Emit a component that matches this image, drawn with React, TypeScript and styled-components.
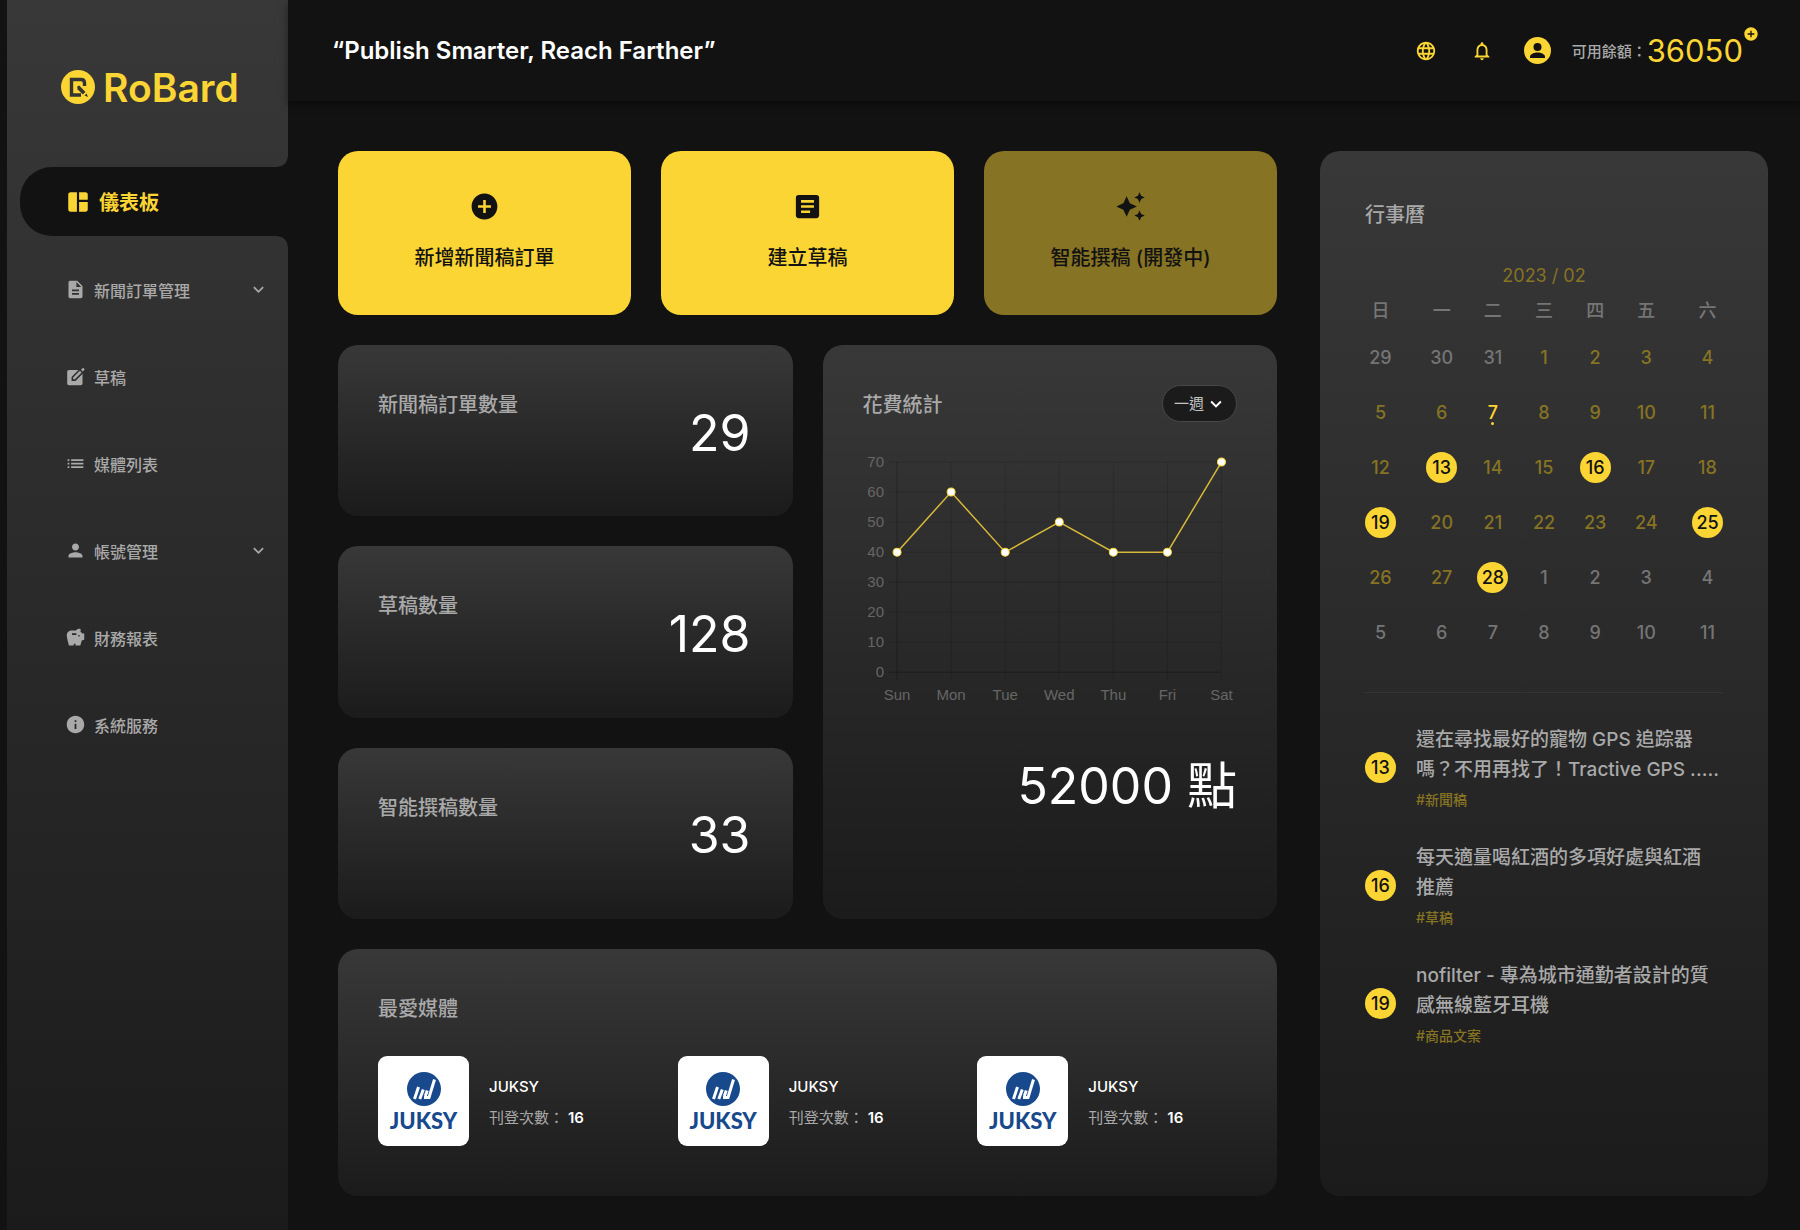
import React from 'react';
import styled, { createGlobalStyle, css } from 'styled-components';
import {
  MdAddCircle,
  MdArticle,
  MdAutoAwesome,
  MdDescription,
  MdInfo,
  MdKeyboardArrowDown,
  MdLanguage,
  MdList,
  MdNotificationsNone,
  MdPerson,
  MdSavings,
  MdSpaceDashboard,
} from 'react-icons/md';

const color = {
  page: '#121212',
  yellow: '#fbd533',
  dimYellow: '#867323',
  text: '#a9a9a9',
  faint: '#757575',
  white: '#ffffff',
};

const panel = css`
  background: linear-gradient(180deg, #383838 0%, #1b1b1b 100%);
  border-radius: 20px;
`;

const GlobalStyle = createGlobalStyle`
  *, *::before, *::after { box-sizing: border-box; }
  body {
    margin: 0;
    background: ${color.page};
    color: ${color.text};
    font-family: Inter, "Noto Sans CJK TC", sans-serif;
    font-size: 16px;
  }
  button, select { font: inherit; }
  h1, h2, p, ul { margin: 0; padding: 0; }
  ul { list-style: none; }
  svg { display: block; }
`;

const Shell = styled.div`
  display: flex;
  min-height: 100vh;
  padding-left: 7px;
`;

const Sidebar = styled.aside`
  flex: 0 0 281px;
  background: linear-gradient(180deg, #383838 0%, #1b1b1b 100%);
`;

const Brand = styled.a`
  display: flex;
  align-items: center;
  gap: 8px;
  height: 167px;
  padding: 7px 0 0 54px;
  color: ${color.yellow};
  font-size: 39px;
  font-weight: 600;
  text-decoration: none;
`;

const NavList = styled.ul`
  display: flex;
  flex-direction: column;
`;

const NavLink = styled.a`
  display: flex;
  align-items: center;
  gap: 8px;
  height: 87px;
  padding: 0 19px 0 58px;
  color: ${color.text};
  font-weight: 500;
  text-decoration: none;

  span {
    flex: 1;
  }
`;

const ActiveLink = styled.a`
  position: relative;
  display: flex;
  align-items: center;
  gap: 8px;
  height: 69px;
  margin: 0 0 10px 13px;
  padding-left: 45px;
  background: ${color.page};
  border-radius: 32px 0 0 32px;
  color: ${color.yellow};
  font-size: 20px;
  font-weight: 700;
  text-decoration: none;

  &::before,
  &::after {
    content: '';
    position: absolute;
    right: 0;
    width: 10px;
    height: 10px;
  }
  &::before {
    bottom: 100%;
    background: radial-gradient(circle at 0 0, transparent 9px, ${color.page} 10px);
  }
  &::after {
    top: 100%;
    background: radial-gradient(circle at 0 100%, transparent 9px, ${color.page} 10px);
  }
`;

const Content = styled.div`
  flex: 1;
  min-width: 0;
  display: flex;
  flex-direction: column;
`;

const TopBar = styled.header`
  display: flex;
  align-items: center;
  justify-content: space-between;
  height: 101px;
  padding: 0 43px 0 44px;
  box-shadow: 0 4px 8px rgba(0, 0, 0, 0.4);
`;

const Slogan = styled.h1`
  color: ${color.white};
  font-size: 24px;
  font-weight: 600;
`;

const Tools = styled.div`
  display: flex;
  align-items: center;
`;

const IconButton = styled.button`
  display: flex;
  align-items: center;
  justify-content: center;
  width: 56px;
  height: 40px;
  padding: 0;
  border: 0;
  background: none;
  color: ${color.yellow};
`;

const Balance = styled.p`
  position: relative;
  display: flex;
  align-items: center;
  margin-left: 6px;
  padding-right: 14px;
  font-size: 15px;
  font-weight: 500;
`;

const BalanceValue = styled.strong`
  color: ${color.yellow};
  font-size: 31px;
  font-weight: 400;
`;

const TopUpButton = styled.button`
  position: absolute;
  top: -6px;
  right: -2px;
  padding: 0;
  border: 0;
  background: none;
  color: ${color.yellow};
`;

const Board = styled.main`
  flex: 1;
  display: grid;
  grid-template-columns: minmax(0, 1fr) 448px;
  gap: 43px;
  padding: 50px 32px 34px 50px;
`;

const Overview = styled.div`
  display: flex;
  flex-direction: column;
  gap: 30px;
`;

const Actions = styled.div`
  display: grid;
  grid-template-columns: repeat(3, 1fr);
  gap: 30px;
`;

const ActionCard = styled.button`
  display: flex;
  flex-direction: column;
  align-items: center;
  justify-content: center;
  gap: 20px;
  height: 164px;
  padding: 0 0 2px;
  border: 0;
  border-radius: 20px;
  background: ${color.yellow};
  color: ${color.page};
  font-size: 20px;
  font-weight: 500;
  line-height: 32px;

  &:disabled {
    background: ${color.dimYellow};
  }
`;

const Statistics = styled.div`
  display: grid;
  grid-template-columns: repeat(2, 1fr);
  gap: 30px;
`;

const StatColumn = styled.div`
  display: flex;
  flex-direction: column;
  gap: 30px;
  min-height: 574px;
`;

const PanelTitle = styled.h2`
  color: ${color.text};
  font-size: 20px;
  font-weight: 500;
  line-height: 40px;
`;

const StatCard = styled.section`
  ${panel}
  flex: 1;
  display: flex;
  justify-content: space-between;
  padding: 40px 42px 36px 40px;
`;

const BigNumber = styled.p`
  align-self: center;
  color: ${color.white};
  font-size: 50px;
  line-height: 60px;
`;

const SpendCard = styled.section`
  ${panel}
  display: flex;
  flex-direction: column;
  padding: 40px;
`;

const PanelHead = styled.div`
  display: flex;
  justify-content: space-between;
`;

const SelectBox = styled.label`
  position: relative;
  display: block;
  width: 75px;
  height: 37px;
  color: ${color.white};

  svg {
    position: absolute;
    top: 8px;
    right: 10px;
    pointer-events: none;
  }
`;

const PeriodSelect = styled.select`
  width: 100%;
  height: 100%;
  padding: 0 0 0 11px;
  border: 1px solid #484848;
  border-radius: 19px;
  background: #1b1b1b;
  color: #c4c4c4;
  font-size: 15px;
  appearance: none;
`;

const ChartArea = styled.div`
  margin: 25px 0 56px;

  svg {
    width: 100%;
    overflow: visible;
  }
  text {
    fill: #666666;
    font-family: 'Liberation Sans', Arial, sans-serif;
    font-size: 15px;
  }
`;

const SpendTotal = styled(BigNumber)`
  align-self: flex-end;
`;

const MediaCard = styled.section`
  ${panel}
  height: 247px;
  padding: 40px;
`;

const MediaList = styled.ul`
  display: grid;
  grid-template-columns: repeat(3, 1fr);
  gap: 40px;
  margin-top: 27px;
`;

const MediaItem = styled.li`
  display: flex;
  align-items: center;
  gap: 20px;
`;

const MediaLogo = styled.div`
  flex: none;
  display: flex;
  flex-direction: column;
  align-items: center;
  gap: 2px;
  width: 91px;
  height: 90px;
  padding-top: 16px;
  border-radius: 9px;
  background: ${color.white};
  color: #17498c;
  font-family: Lato, sans-serif;
  font-size: 22px;
  font-weight: 900;
  line-height: 26px;
`;

const MediaText = styled.div`
  padding-top: 2px;
  color: ${color.text};
  font-size: 15px;
  line-height: 31px;

  strong {
    color: ${color.white};
    font-weight: 500;
  }
  p strong {
    margin-left: 4px;
    font-weight: 600;
  }
`;

const CalendarCard = styled.section`
  ${panel}
  padding: 44px 45px;
`;

const MonthTable = styled.table`
  width: 100%;
  margin-top: 24px;
  border-collapse: collapse;
  table-layout: fixed;
  color: ${color.faint};
  font-size: 18px;

  caption {
    color: ${color.dimYellow};
    line-height: 34px;
  }
  th,
  td {
    height: 55px;
    padding: 0;
    font-weight: 500;
    text-align: center;
  }
  th {
    height: 37px;
    padding-bottom: 6px;
  }
  th:first-child,
  td:first-child {
    text-align: left;
  }
  th:last-child,
  td:last-child {
    text-align: right;
  }
`;

type DayKind = 'out' | 'in' | 'today' | 'marked';

const dayStyles = {
  out: css`
    color: ${color.faint};
  `,
  in: css`
    color: ${color.dimYellow};
  `,
  today: css`
    color: ${color.yellow};

    &::after {
      content: '';
      position: absolute;
      bottom: 3px;
      width: 3px;
      height: 3px;
      border-radius: 50%;
      background: ${color.yellow};
    }
  `,
  marked: css`
    background: ${color.yellow};
    color: ${color.page};
  `,
};

const Day = styled.span<{ $kind: DayKind }>`
  position: relative;
  display: inline-flex;
  flex: none;
  align-items: center;
  justify-content: center;
  width: 31px;
  height: 31px;
  border-radius: 50%;
  font-size: 18px;
  font-weight: 500;
  vertical-align: middle;
  ${({ $kind }) => dayStyles[$kind]}
`;

const EventList = styled.ul`
  display: flex;
  flex-direction: column;
  gap: 33px;
  margin-top: 32px;
  padding-top: 32px;
  border-top: 1px solid #343434;
`;

const EventItem = styled.li`
  display: flex;
  align-items: center;
  gap: 20px;
`;

const EventTitle = styled.p`
  max-width: 303px;
  font-size: 19px;
  font-weight: 500;
  line-height: 30px;
`;

const EventTag = styled.p`
  margin-top: 4px;
  color: ${color.dimYellow};
  font-size: 14px;
  font-weight: 500;
  line-height: 21px;
`;

interface IconProps {
  size: number;
}

function DraftIcon({ size }: IconProps) {
  return (
    <svg width={size} height={size} viewBox="0 0 24 24" aria-hidden="true">
      <mask id="draft-cut">
        <rect width="24" height="24" fill="#ffffff" />
        <path d="M7.500 17V12.500L16.500 3.500L22 0L24 6L21 8L12 17Z" fill="#000000" />
      </mask>
      <rect x="2.500" y="4.500" width="17.500" height="17.500" rx="2" fill="currentColor" mask="url(#draft-cut)" />
      <path d="M9.300 15.200V13.200L17 5.500L19 7.500L11.300 15.200Z" fill="currentColor" />
      <path d="M18.300 4.200L20 2.500Q20.700 2 21.400 2.600L22 3.200Q22.500 3.900 22 4.500L20.300 6.200Z" fill="currentColor" />
    </svg>
  );
}

function AvatarIcon() {
  return (
    <svg width="27" height="27" viewBox="0 0 27 27" aria-hidden="true">
      <circle cx="13.500" cy="13.500" r="13.500" fill="currentColor" />
      <circle cx="13.500" cy="10" r="4" fill="#121212" />
      <path d="M6 21V19.700C6 16.900 10.800 15.500 13.500 15.500C16.200 15.500 21 16.900 21 19.700V21Z" fill="#121212" />
    </svg>
  );
}

const navItems = [
  { label: '新聞訂單管理', Icon: MdDescription, expandable: true },
  { label: '草稿', Icon: DraftIcon, expandable: false },
  { label: '媒體列表', Icon: MdList, expandable: false },
  { label: '帳號管理', Icon: MdPerson, expandable: true },
  { label: '財務報表', Icon: MdSavings, expandable: false },
  { label: '系統服務', Icon: MdInfo, expandable: false },
];

const stats = [
  { label: '新聞稿訂單數量', value: 29 },
  { label: '草稿數量', value: 128 },
  { label: '智能撰稿數量', value: 33 },
];

const spending = [
  { day: 'Sun', value: 40 },
  { day: 'Mon', value: 60 },
  { day: 'Tue', value: 40 },
  { day: 'Wed', value: 50 },
  { day: 'Thu', value: 40 },
  { day: 'Fri', value: 40 },
  { day: 'Sat', value: 70 },
];

const media = [
  { id: 1, name: 'JUKSY', count: 16 },
  { id: 2, name: 'JUKSY', count: 16 },
  { id: 3, name: 'JUKSY', count: 16 },
];

const events = [
  { day: 13, title: '還在尋找最好的寵物 GPS 追踪器嗎？不用再找了！Tractive GPS .....', tag: '#新聞稿' },
  { day: 16, title: '每天適量喝紅酒的多項好處與紅酒推薦', tag: '#草稿' },
  { day: 19, title: 'nofilter - 專為城市通勤者設計的質感無線藍牙耳機', tag: '#商品文案' },
];

const weekdays = ['日', '一', '二', '三', '四', '五', '六'];
const markedDays = [13, 16, 19, 25, 28];
const today = 7;

function buildWeeks() {
  const cells = Array.from({ length: 42 }, (_, i) => {
    const date = new Date(2023, 0, 29 + i);
    const day = date.getDate();
    let kind: DayKind = 'out';
    if (date.getMonth() === 1) {
      kind = markedDays.includes(day) ? 'marked' : day === today ? 'today' : 'in';
    }
    return { day, kind };
  });
  return Array.from({ length: 6 }, (_, w) => cells.slice(w * 7, w * 7 + 7));
}

function BrandMark() {
  return (
    <svg width="34" height="34" viewBox="0 0 34 34" aria-hidden="true">
      <circle cx="17" cy="17" r="17" fill="#fbd533" />
      <path
        d="M20 25H10.500V9.500H20C22.200 9.500 23.500 11 23.500 13V16"
        fill="none"
        stroke="#343434"
        strokeWidth="3.400"
      />
      <path d="M16.200 16.500L18.200 15.500L24.500 22L21.800 24.600L16.500 19.300Z" fill="#343434" />
      <path d="M23.500 25.500L25.600 23.500L27 27Z" fill="#343434" />
    </svg>
  );
}

function JuksyMark() {
  return (
    <svg width="34" height="34" viewBox="0 0 34 34" aria-hidden="true">
      <circle cx="17" cy="17" r="17" fill="#17498c" />
      <g fill="none" stroke="#ffffff" strokeWidth="3">
        <path d="M7.500 27L11.500 15" />
        <path d="M12.800 27L16.300 17.500" />
        <path d="M18.300 24L20.300 18.500" />
        <path d="M17 25.500H22L27.500 7.500" />
      </g>
    </svg>
  );
}

function SpendChart() {
  const left = 34;
  const top = 12;
  const stepX = 54;
  const stepY = 30;
  const bottom = top + stepY * 7;
  const right = left + stepX * 6;
  const points = spending.map((d, i) => ({ x: left + i * stepX, y: bottom - (d.value / 10) * stepY }));

  return (
    <ChartArea>
      <svg viewBox="0 0 374 250" role="img" aria-label="花費統計">
        {Array.from({ length: 8 }, (_, i) => {
          const y = bottom - i * stepY;
          return (
            <g key={i}>
              <line x1={left - 8} x2={right} y1={y} y2={y} stroke="#000000" strokeOpacity={i === 0 ? 0.25 : 0.13} />
              <text x={left - 13} y={y + 5} textAnchor="end">
                {i * 10}
              </text>
            </g>
          );
        })}
        {spending.map((d, i) => {
          const x = left + i * stepX;
          return (
            <g key={d.day}>
              <line x1={x} x2={x} y1={top} y2={bottom + 8} stroke="#000000" strokeOpacity={i === 0 ? 0.25 : 0.13} />
              <text x={x} y={bottom + 28} textAnchor="middle">
                {d.day}
              </text>
            </g>
          );
        })}
        <polyline
          points={points.map((p) => `${p.x},${p.y}`).join(' ')}
          fill="none"
          stroke="#d8b83a"
          strokeWidth="1.500"
        />
        {points.map((p) => (
          <circle key={p.x} cx={p.x} cy={p.y} r="4" fill="#ffffff" stroke="#fbd533" />
        ))}
      </svg>
    </ChartArea>
  );
}

export default function App() {
  return (
    <>
      <GlobalStyle />
      <Shell>
        <Sidebar>
          <Brand href="#">
            <BrandMark />
            RoBard
          </Brand>
          <nav>
            <ActiveLink href="#dashboard" aria-current="page">
              <MdSpaceDashboard size={26} />
              儀表板
            </ActiveLink>
            <NavList>
              {navItems.map(({ label, Icon, expandable }) => (
                <li key={label}>
                  <NavLink href="#">
                    <Icon size={21} />
                    <span>{label}</span>
                    {expandable && <MdKeyboardArrowDown size={21} />}
                  </NavLink>
                </li>
              ))}
            </NavList>
          </nav>
        </Sidebar>

        <Content>
          <TopBar>
            <Slogan>“Publish Smarter, Reach Farther”</Slogan>
            <Tools>
              <IconButton aria-label="語言">
                <MdLanguage size={22} />
              </IconButton>
              <IconButton aria-label="通知">
                <MdNotificationsNone size={22} />
              </IconButton>
              <IconButton aria-label="帳號">
                <AvatarIcon />
              </IconButton>
              <Balance>
                可用餘額：
                <BalanceValue>36050</BalanceValue>
                <TopUpButton aria-label="儲值">
                  <MdAddCircle size={16} />
                </TopUpButton>
              </Balance>
            </Tools>
          </TopBar>

          <Board>
            <Overview>
              <Actions>
                <ActionCard>
                  <MdAddCircle size={31} />
                  新增新聞稿訂單
                </ActionCard>
                <ActionCard>
                  <MdArticle size={31} />
                  建立草稿
                </ActionCard>
                <ActionCard disabled>
                  <MdAutoAwesome size={31} />
                  智能撰稿 (開發中)
                </ActionCard>
              </Actions>

              <Statistics>
                <StatColumn>
                  {stats.map((s) => (
                    <StatCard key={s.label}>
                      <PanelTitle>{s.label}</PanelTitle>
                      <BigNumber>{s.value}</BigNumber>
                    </StatCard>
                  ))}
                </StatColumn>
                <SpendCard>
                  <PanelHead>
                    <PanelTitle>花費統計</PanelTitle>
                    <SelectBox>
                      <PeriodSelect aria-label="統計期間" defaultValue="week">
                        <option value="week">一週</option>
                      </PeriodSelect>
                      <MdKeyboardArrowDown size={22} />
                    </SelectBox>
                  </PanelHead>
                  <SpendChart />
                  <SpendTotal>52000 點</SpendTotal>
                </SpendCard>
              </Statistics>

              <MediaCard>
                <PanelTitle>最愛媒體</PanelTitle>
                <MediaList>
                  {media.map((m) => (
                    <MediaItem key={m.id}>
                      <MediaLogo>
                        <JuksyMark />
                        {m.name}
                      </MediaLogo>
                      <MediaText>
                        <strong>{m.name}</strong>
                        <p>
                          刊登次數：<strong>{m.count}</strong>
                        </p>
                      </MediaText>
                    </MediaItem>
                  ))}
                </MediaList>
              </MediaCard>
            </Overview>

            <CalendarCard>
              <PanelTitle>行事曆</PanelTitle>
              <MonthTable>
                <caption>2023 / 02</caption>
                <thead>
                  <tr>
                    {weekdays.map((w) => (
                      <th key={w} scope="col">
                        <Day $kind="out">{w}</Day>
                      </th>
                    ))}
                  </tr>
                </thead>
                <tbody>
                  {buildWeeks().map((week, i) => (
                    <tr key={i}>
                      {week.map(({ day, kind }) => (
                        <td key={day}>
                          <Day $kind={kind}>{day}</Day>
                        </td>
                      ))}
                    </tr>
                  ))}
                </tbody>
              </MonthTable>
              <EventList>
                {events.map((e) => (
                  <EventItem key={e.day}>
                    <Day $kind="marked">{e.day}</Day>
                    <div>
                      <EventTitle>{e.title}</EventTitle>
                      <EventTag>{e.tag}</EventTag>
                    </div>
                  </EventItem>
                ))}
              </EventList>
            </CalendarCard>
          </Board>
        </Content>
      </Shell>
    </>
  );
}
